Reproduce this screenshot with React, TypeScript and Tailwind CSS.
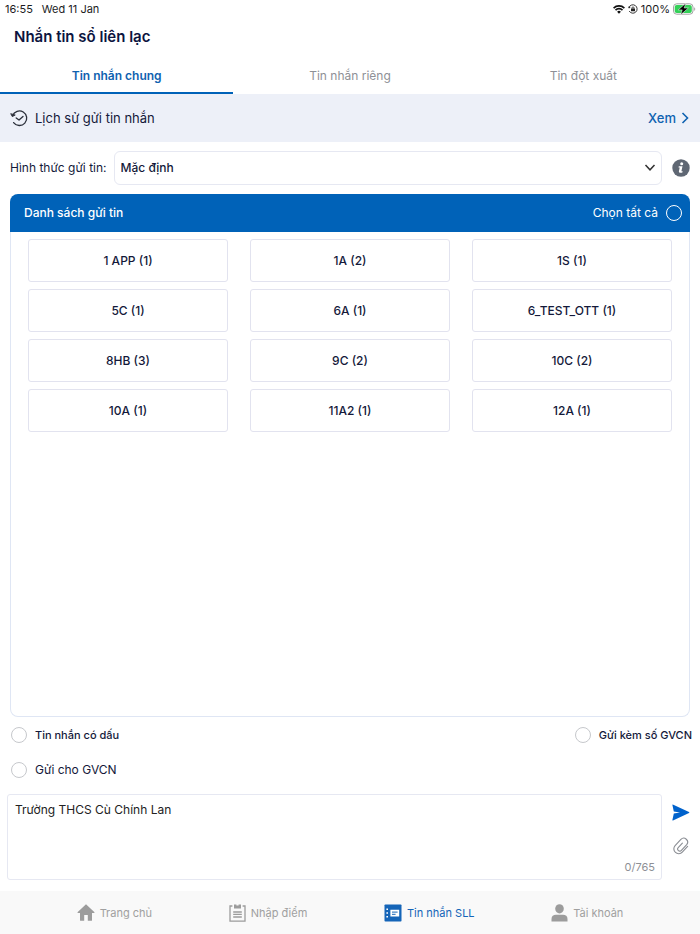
import { useState } from 'react';

const tabs = ['Tin nhắn chung', 'Tin nhắn riêng', 'Tin đột xuất'];

const classes = [
  '1 APP (1)', '1A (2)', '1S (1)',
  '5C (1)', '6A (1)', '6_TEST_OTT (1)',
  '8HB (3)', '9C (2)', '10C (2)',
  '10A (1)', '11A2 (1)', '12A (1)',
];

function WifiIcon() {
  return (
    <svg viewBox="0 0 12 9" className="w-3 h-[9px]" fill="none" stroke="#111" strokeWidth="1.6">
      <path d="M0.6 3.1a7.6 7.6 0 0 1 10.8 0M2.5 5.1a4.9 4.9 0 0 1 7 0" />
      <path d="M4.1 6.8a2.7 2.7 0 0 1 3.8 0L6 8.8z" fill="#111" stroke="none" />
    </svg>
  );
}

function LockIcon() {
  return (
    <svg viewBox="0 0 10 10" className="w-[10px] h-[10px]" fill="none" stroke="#222">
      <path d="M1 3.4A4.2 4.2 0 1 1 1.2 7" strokeWidth="0.9" />
      <path d="M0 2.6l0.9 2 1.8-1z" fill="#222" stroke="none" />
      <rect x="3" y="4.5" width="4" height="2.8" rx="0.4" fill="#222" stroke="none" />
      <path d="M4 4.8V3.9a1 1 0 0 1 2 0v0.9" strokeWidth="0.8" />
    </svg>
  );
}

function BatteryIcon() {
  return (
    <svg viewBox="0 0 23 12" className="w-[23px] h-3">
      <rect x="0.5" y="0.8" width="19.5" height="10.4" rx="3.2" fill="#fff" stroke="#a3a3a3" />
      <rect x="1.7" y="2" width="17.1" height="8" rx="2" fill="#34d058" />
      <path d="M21.2 4.2c1.4 0.5 1.4 3.1 0 3.6z" fill="#a3a3a3" />
      <path d="M12.8 0.2L5.2 6.9h4L7.6 11.8l7.8-6.8h-4.2z" fill="#000" stroke="#fff" strokeWidth="0.5" />
    </svg>
  );
}

function HistoryIcon() {
  return (
    <svg viewBox="0 0 18 18" className="w-[18px] h-[18px]" fill="none" stroke="#2b2f3a" strokeWidth="1.3" strokeLinecap="round" strokeLinejoin="round">
      <path d="M2.6 6.6A7.3 7.3 0 1 1 3.6 13.6" />
      <path d="M0.9 5l1.4 2.6 2.6-1.4z" fill="#2b2f3a" strokeWidth="0.9" />
      <path d="M6.2 9l2.8 2.1 4-3.7" />
    </svg>
  );
}

function InfoIcon() {
  return (
    <svg viewBox="0 0 18 18" className="w-[18px] h-[18px]">
      <circle cx="9" cy="9" r="8.7" fill="#5f6773" />
      <circle cx="9.7" cy="4.7" r="1.5" fill="#fff" />
      <path d="M6.8 7.3h3.7L9.4 12.2h1.3l-0.3 1.2c-1.2 0.7-3.8 0.7-3.5-1.1l0.8-3.8H6.5z" fill="#fff" />
    </svg>
  );
}

function SendIcon() {
  return (
    <svg viewBox="0 0 18 17" className="w-[18px] h-[17px]">
      <path d="M0.8 0.5Q0.4 0.2 0.4 0.9L1.8 7.4 8 8.4 1.8 9.5 0.4 16Q0.4 16.7 1 16.5L17 8.9Q17.8 8.4 17 8z" fill="#0062cc" />
    </svg>
  );
}

function ClipIcon() {
  return (
    <svg viewBox="0 0 16 18" className="w-4 h-[18px]" fill="none" stroke="#8a8d93" strokeWidth="1.1" strokeLinecap="round">
      <path d="M14.6 9.4l-5.3 5.7a4.8 4.8 0 0 1-7.2-6.5l5.8-6.2a3.9 3.9 0 0 1 5.8 5.2l-5.3 5.8a2.1 2.1 0 0 1-3.2-2.8l4.2-4.5" />
    </svg>
  );
}

function HomeIcon() {
  return (
    <svg viewBox="0 0 18 17" className="w-[18px] h-[17px]" fill="#9c9c9c">
      <path d="M9 0.3L0.5 8.2Q0.3 9 1 9H3v7.2q0 0.6 0.6 0.6H7.2V11h3.6v5.8h3.6q0.6 0 0.6-0.6V9h2q0.7 0 0.5-0.8z" />
    </svg>
  );
}

function NoteIcon() {
  return (
    <svg viewBox="0 0 17 18" className="w-[17px] h-[18px]" fill="none" stroke="#9c9c9c" strokeWidth="1.3">
      <path d="M3.4 2H1v15.2h15V2h-2.4M4.2 8h8.6M4.2 10.4h8.6M4.2 13h8.6" />
      <path d="M5 0.4h2.4v1h2.2v-1H12v4.2H5z" fill="#9c9c9c" stroke="none" />
    </svg>
  );
}

function MessageIcon() {
  return (
    <svg viewBox="0 0 18 18" className="w-[18px] h-[18px]">
      <rect x="0.5" y="0.5" width="17" height="17" rx="0.8" fill="#1565b8" />
      <path d="M2.4 4.4h1.6v1.6H2.4zM2.4 8.2h1.6v1.6H2.4zM2.4 12h1.6v1.6H2.4zM6.4 5.8h8.8v6.8H6.4z" fill="#fff" />
      <path d="M8 8.1h5.6M8 10.3h3.6" stroke="#1565b8" strokeWidth="1" />
    </svg>
  );
}

function UserIcon() {
  return (
    <svg viewBox="0 0 17 18" className="w-[17px] h-[18px]" fill="#9c9c9c">
      <ellipse cx="8.5" cy="4.8" rx="4.3" ry="4.6" />
      <path d="M0.5 17.5v-2.6c0-2.6 1.9-4.1 4.4-4.1h7.2c2.5 0 4.4 1.5 4.4 4.1v2.6z" />
    </svg>
  );
}

const navItems = [
  { label: 'Trang chủ', icon: <HomeIcon />, active: false },
  { label: 'Nhập điểm', icon: <NoteIcon />, active: false },
  { label: 'Tin nhắn SLL', icon: <MessageIcon />, active: true },
  { label: 'Tài khoản', icon: <UserIcon />, active: false },
];

export default function App() {
  const [tab, setTab] = useState(0);
  const [message, setMessage] = useState('Trường THCS Cù Chính Lan');

  const circle = 'appearance-none w-4 h-4 shrink-0 rounded-full border border-[#c6c8cc] bg-white checked:bg-[#0062b8]';

  return (
    <div className="min-h-screen flex flex-col bg-white font-['Inter',sans-serif] text-[12px] leading-5 text-[#14193a]">
      {/* Status bar */}
      <div className="h-[18px] flex items-center justify-between pl-[5px] pr-1 text-[11px] text-[#1c1c1e]">
        <div className="flex gap-[9px]">
          <span>16:55</span>
          <span>Wed 11 Jan</span>
        </div>
        <div className="flex items-center gap-[3px]">
          <WifiIcon />
          <LockIcon />
          <span>100%</span>
          <BatteryIcon />
        </div>
      </div>

      {/* Title */}
      <h1 className="h-[38px] flex items-center px-[14px] text-[15px] font-semibold text-[#0c1440]">Nhắn tin sổ liên lạc</h1>

      {/* Tabs */}
      <div className="grid grid-cols-3 h-[38px]">
        {tabs.map((name, i) => (
          <button
            key={name}
            onClick={() => setTab(i)}
            className={tab === i
              ? 'border-b-2 border-[#0062b8] font-semibold text-[#0f62b0] pt-1'
              : 'border-b-2 border-transparent text-[#8e9096] pt-1'}
          >
            {name}
          </button>
        ))}
      </div>

      {/* History */}
      <div className="h-12 flex items-center gap-[7px] px-[10px] bg-[#edf0f8] text-[13px]">
        <HistoryIcon />
        <span>Lịch sử gửi tin nhắn</span>
        <a href="#" className="ml-auto flex items-center gap-1 font-medium text-[#0f62b0]">
          Xem
          <svg viewBox="0 0 10 12" className="w-[10px] h-3" fill="none" stroke="#0f62b0" strokeWidth="1.6">
            <path d="M2.5 1L7.5 6l-5 5" />
          </svg>
        </a>
      </div>

      {/* Send type */}
      <div className="flex items-center px-[10px] pt-[9px]">
        <label htmlFor="type" className="mr-[7px]">Hình thức gửi tin:</label>
        <div className="relative flex-1">
          <select id="type" className="appearance-none w-full h-[34px] px-[6px] rounded-md border border-[#e6e8f2] bg-white font-medium">
            <option>Mặc định</option>
          </select>
          <svg viewBox="0 0 12 8" className="absolute right-[6px] top-[13px] w-3 h-2 pointer-events-none" fill="none" stroke="#333" strokeWidth="1.5">
            <path d="M1.5 1L6 5.8 10.5 1" />
          </svg>
        </div>
        <button aria-label="Thông tin" className="ml-[10px]">
          <InfoIcon />
        </button>
      </div>

      {/* Class list */}
      <div className="flex-1 flex flex-col mx-[10px] mt-[9px]">
        <div className="h-[38px] flex items-center justify-between pl-[14px] pr-2 rounded-t-lg bg-[#0062b8] text-white">
          <h2 className="font-medium">Danh sách gửi tin</h2>
          <label className="flex items-center gap-2">
            Chọn tất cả
            <input type="checkbox" className="appearance-none w-4 h-4 rounded-full border border-white checked:bg-white" />
          </label>
        </div>
        <div className="flex-1 rounded-b-lg border border-t-0 border-[#dfe6f4]">
          <div className="grid grid-cols-3 gap-x-[22px] gap-y-[7px] px-[17px] py-[7px]">
            {classes.map((name) => (
              <button key={name} className="h-[43px] rounded-[3px] border border-[#e2e3ef] font-medium">
                {name}
              </button>
            ))}
          </div>
        </div>
      </div>

      {/* Options */}
      <div className="flex justify-between pl-[11px] pr-2 pt-2 pb-[14px]">
        <div className="flex flex-col gap-[15px]">
          <label className="flex items-center gap-2 text-[11px] font-medium">
            <input type="checkbox" className={circle} />
            Tin nhắn có dấu
          </label>
          <label className="flex items-center gap-2">
            <input type="checkbox" className={circle} />
            Gửi cho GVCN
          </label>
        </div>
        <label className="flex items-center gap-2 self-start text-[11px] font-medium">
          <input type="checkbox" className={circle} />
          Gửi kèm số GVCN
        </label>
      </div>

      {/* Message */}
      <div className="flex pl-[7px] pr-[10px] pb-[11px]">
        <div className="relative flex-1">
          <textarea
            aria-label="Nội dung tin nhắn"
            value={message}
            onChange={(e) => setMessage(e.target.value)}
            className="block w-full h-[86px] resize-none rounded-[3px] border border-[#e6e8f2] px-[7px] py-[5px] text-[#222]"
          />
          <span className="absolute right-[7px] bottom-[3px] text-[11px] text-[#8e9096]">0/765</span>
        </div>
        <div className="ml-[10px] flex flex-col items-center gap-4 pt-[10px]">
          <button aria-label="Gửi"><SendIcon /></button>
          <button aria-label="Đính kèm"><ClipIcon /></button>
        </div>
      </div>

      {/* Bottom nav */}
      <nav className="h-[43px] flex justify-evenly bg-[#f9f9f9] text-[11px]">
        {navItems.map((item) => (
          <a
            key={item.label}
            href="#"
            className={item.active
              ? 'flex items-center gap-[5px] text-[#1565b8]'
              : 'flex items-center gap-[5px] text-[#a0a0a0]'}
          >
            {item.icon}
            {item.label}
          </a>
        ))}
      </nav>
    </div>
  );
}
